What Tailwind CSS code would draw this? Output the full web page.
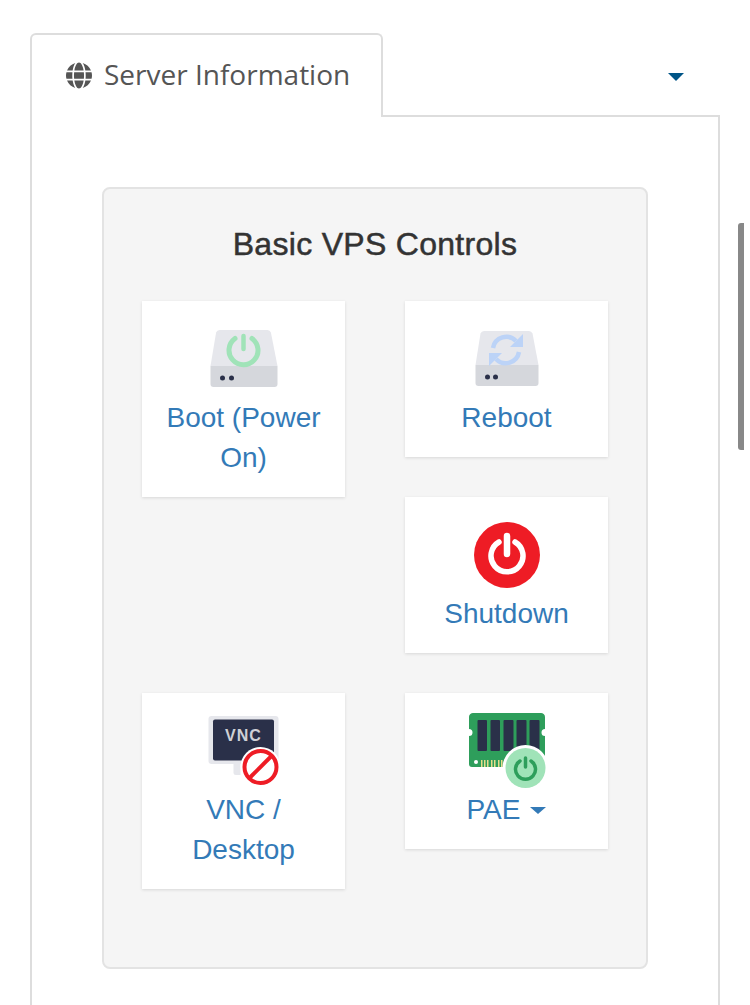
<!DOCTYPE html>
<html>
<head>
<meta charset="utf-8">
<script src="https://cdn.jsdelivr.net/npm/@tailwindcss/browser@4"></script>
</head>
<body class="bg-white">
<div class="relative h-[1005px] overflow-hidden pt-[33px] font-['Liberation_Sans',Arial,sans-serif]">
  <div class="ml-[30px] w-[690px] flex items-center relative z-10 -mb-[2px]">
    <div class="w-[353px] h-[84px] bg-white border-2 border-b-0 border-[#ddd] rounded-t-[6px] flex items-center gap-[12px] pl-[34px] pb-[4px] text-[#555] font-['Open_Sans',sans-serif] text-[28px]">
      <svg class="w-[26px] h-[27px] mt-[2px]" viewBox="0 0 496 512" fill="#555"><path d="M336.5 160C322 70.7 287.8 8 248 8s-74 62.7-88.5 152h177zM152 256c0 22.2 1.2 43.5 3.3 64h185.3c2.1-20.5 3.3-41.8 3.3-64s-1.2-43.5-3.3-64H155.3c-2.1 20.5-3.3 41.8-3.3 64zm324.7-96c-28.6-67.9-86.5-120.4-158-141.6 24.4 33.8 41.2 84.7 50 141.6h108zM177.2 18.4C105.8 39.6 47.8 92.1 19.3 160h108c8.7-56.9 25.5-107.8 49.9-141.6zM487.4 192H372.7c2.1 21 3.3 42.5 3.3 64s-1.2 43-3.3 64h114.6c5.5-20.5 8.6-41.8 8.6-64s-3.1-43.5-8.5-64zM120 256c0-21.5 1.2-43 3.3-64H8.6C3.2 212.5 0 233.8 0 256s3.2 43.5 8.6 64h114.6c-2-21-3.2-42.5-3.2-64zm39.5 96c14.5 89.3 48.7 152 88.5 152s74-62.7 88.5-152h-177zm159.3 141.6c71.4-21.2 129.4-73.7 158-141.6h-108c-8.8 56.9-25.6 107.8-50 141.6zM19.3 352c28.6 67.9 86.5 120.4 158 141.6-24.4-33.8-41.2-84.7-50-141.6h-108z"/></svg>
      <span>Server Information</span>
    </div>
    <div class="ml-auto pr-[36px] pt-[4px]">
      <svg class="block w-[16px] h-[8px]" viewBox="0 0 16 8" fill="#005587"><path d="M0 0h16L8 8z"/></svg>
    </div>
  </div>
  <div class="ml-[30px] w-[690px] border-2 border-[#ddd] p-[70px] bg-white">
    <div class="w-[546px] bg-[#f5f5f5] border-2 border-[#e3e3e3] rounded-[8px] pt-[35px] px-[38px] pb-[78px]">
      <h2 class="text-center text-[32px] leading-[40px] font-normal tracking-[0.3px] [-webkit-text-stroke:0.5px_#333] text-[#333] mb-[37px]">Basic VPS Controls</h2>
      <div class="grid grid-cols-[203px_203px] gap-x-[60px] grid-rows-[196px_196px_auto] items-start text-[28px] leading-[40px] text-[#337ab7] text-center">

        <a class="block bg-white shadow-[0_1px_3px_rgba(0,0,0,0.12)] pt-[16px] pb-[20px] px-[15px]">
          <svg class="block mx-auto w-[100px] h-[80px] overflow-visible" viewBox="0 0 100 80">
            <path d="M25.5 13h48a4 4 0 0 1 3.4 2.5L83.5 49H16.5l5.6-33.5A4 4 0 0 1 25.5 13z" fill="#e6e7ec"/>
            <path d="M16.5 49h67v18a3 3 0 0 1-3 3h-61a3 3 0 0 1-3-3z" fill="#d5d7dc"/>
            <circle cx="28.5" cy="61" r="2.5" fill="#2a3049"/><circle cx="37.5" cy="61" r="2.5" fill="#2a3049"/>
            <path d="M41 21.500a14.500 14.500 0 1 0 17 0" fill="none" stroke="#a0e3b8" stroke-width="5" stroke-linecap="round"/>
            <path d="M49.500 19v13" stroke="#a0e3b8" stroke-width="4.500" stroke-linecap="round"/>
          </svg>
          <span class="block translate-y-[1px]">Boot (Power On)</span>
        </a>

        <a class="block bg-white shadow-[0_1px_3px_rgba(0,0,0,0.12)] pt-[16px] pb-[20px] px-[15px]">
          <svg class="block mx-auto w-[100px] h-[80px] overflow-visible" viewBox="0 0 100 80">
            <path d="M27 14h45a4 4 0 0 1 3.500 2.500L81.500 48h-63l5-31.500A4 4 0 0 1 27 14z" fill="#e6e7ec"/>
            <path d="M18.500 48h63v18a3 3 0 0 1-3 3h-57a3 3 0 0 1-3-3z" fill="#d5d7dc"/>
            <circle cx="30.500" cy="60" r="2.500" fill="#2a3049"/><circle cx="38.500" cy="60" r="2.500" fill="#2a3049"/>
            <path d="M36 31a13.500 13.500 0 0 1 23-7" fill="none" stroke="#bcd3f7" stroke-width="4.500"/>
            <path d="M66 17v13H53z" fill="#bcd3f7"/>
            <path d="M62 35a13.500 13.500 0 0 1-23 7" fill="none" stroke="#bcd3f7" stroke-width="4.500"/>
            <path d="M32 49V36h13z" fill="#bcd3f7"/>
          </svg>
          <span class="block translate-y-[1px]">Reboot</span>
        </a>

        <div></div>

        <a class="block bg-white shadow-[0_1px_3px_rgba(0,0,0,0.12)] pt-[16px] pb-[20px] px-[15px]">
          <svg class="block mx-auto w-[100px] h-[80px] overflow-visible" viewBox="0 0 100 80">
            <circle cx="50" cy="42" r="33" fill="#ee1c25"/>
            <path d="M42 29a16 16 0 1 0 16 0" fill="none" stroke="#fff" stroke-width="5.500" stroke-linecap="round"/>
            <path d="M50 23v18" stroke="#fff" stroke-width="6.500" stroke-linecap="round"/>
          </svg>
          <span class="block translate-y-[1px]">Shutdown</span>
        </a>

        <a class="block bg-white shadow-[0_1px_3px_rgba(0,0,0,0.12)] pt-[16px] pb-[20px] px-[15px]">
          <svg class="block mx-auto w-[100px] h-[80px] overflow-visible" viewBox="0 0 100 80">
            <rect x="14.500" y="7" width="70" height="48" rx="3" fill="#e6e7ec"/>
            <rect x="19" y="10.500" width="61" height="41" rx="2" fill="#2a3049"/>
            <path d="M39.500 55h7v11h-4.500a2.500 2.500 0 0 1-2.500-2.500z" fill="#e6e7ec"/>
            <text x="49.500" y="31.500" text-anchor="middle" font-family="Liberation Sans, sans-serif" font-weight="700" font-size="16" letter-spacing="1" fill="#cfd1d6">VNC</text>
            <circle cx="66.500" cy="58" r="20" fill="#fff"/>
            <circle cx="66.500" cy="58" r="16" fill="#fff" stroke="#ee1c25" stroke-width="4"/>
            <path d="M55.500 69L77.500 47" stroke="#ee1c25" stroke-width="4"/>
          </svg>
          <span class="block translate-y-[1px]">VNC / Desktop</span>
        </a>

        <a class="block bg-white shadow-[0_1px_3px_rgba(0,0,0,0.12)] pt-[16px] pb-[20px] px-[15px]">
          <svg class="block mx-auto w-[100px] h-[80px] overflow-visible" viewBox="0 0 100 80">
            <path d="M16.500 4h67a4 4 0 0 1 4.500 4v12a3.500 3.500 0 0 0 0 7v28a3 3 0 0 1-3 3h-70a3 3 0 0 1-3-3V27a3.500 3.500 0 0 0 0-7V8a4 4 0 0 1 4.500-4z" fill="#2e9e5b"/>
            <g fill="#2a3049">
              <rect x="20.500" y="11" width="9.500" height="31" rx="1"/>
              <rect x="33.500" y="11" width="9.500" height="31" rx="1"/>
              <rect x="46.500" y="11" width="10" height="31" rx="1"/>
              <rect x="59.500" y="11" width="10" height="31" rx="1"/>
              <rect x="72.500" y="11" width="10" height="31" rx="1"/>
            </g>
            <circle cx="19" cy="53" r="2" fill="#fff"/>
            <g fill="#e8dc8a">
              <rect x="24" y="51" width="1.500" height="7"/><rect x="27" y="51" width="1.500" height="7"/><rect x="30" y="51" width="1.500" height="7"/>
              <rect x="34" y="51" width="1.500" height="7"/><rect x="37" y="51" width="1.500" height="7"/>
              <rect x="41" y="51" width="1.500" height="7"/><rect x="44" y="51" width="1.500" height="7"/><rect x="47" y="51" width="1.500" height="7"/>
            </g>
            <circle cx="68.500" cy="59" r="23" fill="#fff"/>
            <circle cx="68.500" cy="59" r="20" fill="#a0e3b8"/>
            <path d="M63 52a10 10 0 1 0 11 0" fill="none" stroke="#2e9e5b" stroke-width="3.500" stroke-linecap="round"/>
            <path d="M68.500 49v9" stroke="#2e9e5b" stroke-width="3.500" stroke-linecap="round"/>
          </svg>
          <span class="flex translate-y-[1px] items-center justify-center gap-[10px]">PAE <svg class="w-[16px] h-[7px]" viewBox="0 0 16 7" fill="#337ab7"><path d="M0 0h16L8 7z"/></svg></span>
        </a>
      </div>
    </div>
  </div>
  <div class="absolute left-[738px] top-[223px] w-[6px] h-[227px] bg-[#888] rounded-l-[3px]"></div>
</div>
</body>
</html>
